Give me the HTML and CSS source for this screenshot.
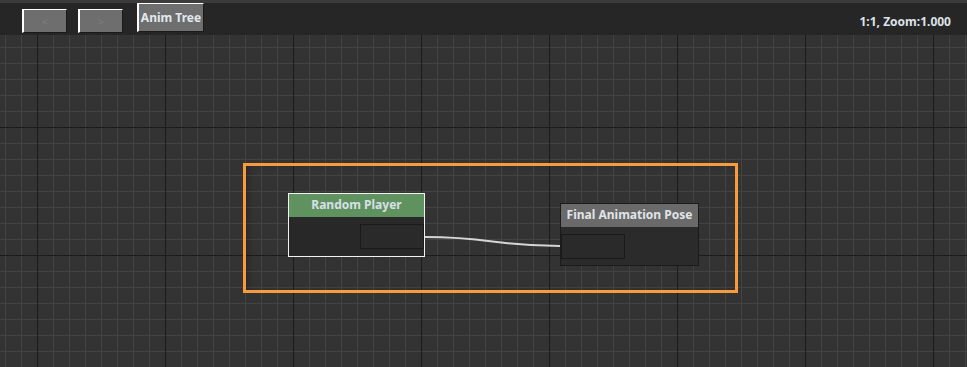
FILE: index.html
```html
<!DOCTYPE html>
<html>
<head>
<meta charset="utf-8">
<link rel="stylesheet" href="styles.css">
</head>
<body>
<div class="app">
  <div class="topstrip"></div>
  <div class="toolbar">
    <div class="btn btn-nav">&lt;</div>
    <div class="btn btn-nav btn-fwd">&gt;</div>
    <div class="btn btn-tab">Anim Tree</div>
    <div class="zoom-info">1:1, Zoom:1.000</div>
  </div>
  <div class="canvas">
    <div class="group-box"></div>
    <svg class="links" width="967" height="332" viewBox="0 0 967 332">
      <path d="M425 202 C492 202 493 211 560 211" fill="none" stroke="#d6d6d6" stroke-width="2"/>
    </svg>
    <div class="node node-random">
      <div class="node-title title-green">Random Player</div>
      <div class="node-body body-out">
        <div class="slot"></div>
      </div>
    </div>
    <div class="node node-final">
      <div class="node-title title-gray">Final Animation Pose</div>
      <div class="node-body body-in">
        <div class="slot"></div>
      </div>
    </div>
  </div>
</div>
</body>
</html>
```
FILE: styles.css
```css
html, body {
  margin: 0;
  padding: 0;
  background: #333333;
}
.app {
  width: 967px;
  height: 367px;
  overflow: hidden;
  display: flex;
  flex-direction: column;
  font-family: "Noto Sans", "Open Sans", sans-serif;
  font-weight: bold;
  font-size: 12px;
}
.topstrip {
  height: 3px;
  background: #3b3b3b;
  flex: none;
}
.toolbar {
  height: 32px;
  flex: none;
  background: #262626;
  display: flex;
  align-items: flex-start;
  padding-left: 22px;
  box-sizing: border-box;
}
.btn {
  box-sizing: border-box;
  background: #6e6e6e;
  border-top: 1px solid #ffffff;
  border-left: 2px solid #ffffff;
  border-right: 1px solid #1a1a1a;
  border-bottom: 1px solid #1a1a1a;
  display: flex;
  align-items: center;
  justify-content: center;
}
.btn-nav {
  width: 45px;
  height: 24px;
  margin-top: 6px;
  color: #7d7d7d;
  font-size: 11px;
  font-weight: normal;
}
.btn-fwd {
  margin-left: 11px;
}
.btn-tab {
  width: 67px;
  height: 29px;
  margin-top: 0;
  margin-left: 14px;
  color: #e2e8ee;
  font-size: 12px;
}
.zoom-info {
  margin-left: auto;
  margin-right: 16px;
  margin-top: 10px;
  color: #dde3e9;
  font-size: 12px;
}
.canvas {
  flex: 1;
  position: relative;
  background-color: #333333;
  background-image:
    linear-gradient(to right, #1c1c1c 1px, transparent 1px),
    linear-gradient(to bottom, #1c1c1c 1px, transparent 1px),
    linear-gradient(to right, #434343 1px, transparent 1px),
    linear-gradient(to bottom, #434343 1px, transparent 1px);
  background-size: 128px 128px, 128px 128px, 16px 16px, 16px 16px;
  background-position: 37px 0, 0 92px, 5px 0, 0 12px;
}
.group-box {
  position: absolute;
  left: 243px;
  top: 128px;
  width: 495px;
  height: 130px;
  box-sizing: border-box;
  border: 3px solid #f89b3d;
  box-shadow: inset 4px 0 6px -2px rgba(0, 0, 0, 0.25);
}
.links {
  position: absolute;
  left: 0;
  top: 0;
}
.node {
  position: absolute;
  box-sizing: border-box;
  display: flex;
  flex-direction: column;
}
.node-random {
  left: 288px;
  top: 158px;
  width: 137px;
  height: 64px;
  border: 1px solid #f2f2f2;
  background: #282828;
}
.node-final {
  left: 560px;
  top: 168px;
  width: 139px;
  height: 63px;
  border: 1px solid #1b1b1b;
  background: #2b2b2b;
}
.node-title {
  height: 23px;
  flex: none;
  box-sizing: border-box;
  padding-bottom: 2px;
  display: flex;
  align-items: center;
  justify-content: center;
  color: #d6e0e6;
  font-size: 12px;
}
.title-green {
  background: #609260;
}
.title-gray {
  background: #6a6a6a;
  color: #e0e4e8;
}
.node-body {
  flex: 1;
  display: flex;
}
.body-out {
  justify-content: flex-end;
  padding-top: 7px;
}
.body-in {
  justify-content: flex-start;
  padding-top: 7px;
}
.slot {
  width: 64px;
  height: 25px;
  box-sizing: border-box;
  border: 1px solid #1a1a1a;
  background: #2a2a2a;
}
```
